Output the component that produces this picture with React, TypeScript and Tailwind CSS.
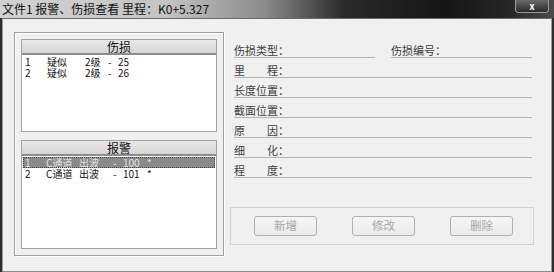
import React from "react";

const cjk = { fontFamily: '"SimSun", "Noto Sans CJK SC", "DejaVu Sans", sans-serif' };

function Field({ label, className = "" }: { label: string; className?: string }) {
  return (
    <div className={`h-[20px] flex items-end border-b border-[#b4b4b4] ${className}`}>
      <span className="text-[11px] leading-[12px] pb-[1px] text-[#3c3c3c] whitespace-pre">{label}</span>
    </div>
  );
}

function ListBox({
  title,
  rows,
  cols,
  selected,
  className = "",
}: {
  title: string;
  rows: string[][];
  cols: string[];
  selected?: number;
  className?: string;
}) {
  return (
    <div className={`flex flex-col border border-[#a0a0a0] bg-white ${className}`}>
      <div className="h-[15px] flex items-center justify-center bg-gradient-to-b from-[#e8e8e8] to-[#d6d6d6] border-b-2 border-[#8c8c8c] text-[12px] leading-[12px] text-[#111]">
        {title}
      </div>
      <div className="flex flex-col pt-[1px] px-[1px]">
        {rows.map((r, i) => (
          <div
            key={i}
            className={`h-[11px] flex items-center pl-[2px] text-[10px] leading-[11px] whitespace-pre ${
              selected === i ? "bg-[#8a8a8a] text-[#e4e4e4] outline-1 outline-dotted outline-[#444] -outline-offset-1" : "text-[#111]"
            }`}
          >
            {r.map((c, j) => (
              <span key={j} className={cols[j]}>
                {c}
              </span>
            ))}
          </div>
        ))}
      </div>
    </div>
  );
}

function Btn({ label }: { label: string }) {
  return (
    <div className="w-[63px] h-[20px] flex items-center justify-center rounded-[3px] border border-[#b0b0b0] bg-gradient-to-b from-[#f6f6f6] to-[#ebebeb] text-[11.5px] text-[#a6a6a6]">
      {label}
    </div>
  );
}

export default function App() {
  return (
    <div className="w-[554px] h-[272px] bg-[#2e2e2e] overflow-hidden" style={cjk}>
      <div className="h-[18px] relative bg-[linear-gradient(90deg,#d2d2d2_0%,#c4c4c4_30%,#8a8a8a_48%,#2a2a2a_62%,#151515_80%,#262626_92%,#4a4a4a_100%)]">
        <span className="absolute left-[2px] top-[2px] text-[12px] leading-[14px] text-[#111] whitespace-pre">
          文件1 报警、伤损查看 里程：K0+5.327
        </span>
        <div className="absolute left-[515px] top-0 w-[34px] h-[13px] rounded-b-[4px] border border-t-0 border-[#9a9a9a] bg-gradient-to-b from-[#6a6a6a] to-[#2a2a2a] flex items-center justify-center text-white text-[9px] leading-[9px] font-bold">
          x
        </div>
      </div>
      <div className="h-[254px] mx-[2px] mb-[2px] bg-[#f0f0f0] border-t border-[#6a6a6a] border-x border-x-[#9a9a9a] border-b border-b-[#8a8a8a] flex">
        <div className="ml-[11px] mt-[13px] w-[210px] h-[224px] border border-[#a0a0a0] shadow-[inset_1px_1px_0_#ffffff,1px_1px_0_#ffffff] flex flex-col px-[6px] pt-[6px]">
          <ListBox
            title="伤损"
            className="h-[93px]"
            cols={["w-[22px]", "w-[38px]", "w-[23px]", "w-[10px]", ""]}
            rows={[
              ["1", "疑似", "2级", "-", "25"],
              ["2", "疑似", "2级", "-", "26"],
            ]}
          />
          <ListBox
            title="报警"
            className="h-[109px] mt-[8px]"
            selected={0}
            cols={["w-[21px]", "w-[33px]", "w-[34px]", "w-[10px]", "w-[24px]", ""]}
            rows={[
              ["1", "C通道", "出波", "-", "100", "*"],
              ["2", "C通道", "出波", "-", "101", "*"],
            ]}
          />
        </div>
        <div className="ml-[6px] w-[304px] flex flex-col">
          <div className="mt-[19px] ml-[4px] w-[298px] flex flex-col">
            <div className="flex gap-[16px]">
              <Field label="伤损类型：" className="w-[141px]" />
              <Field label="伤损编号：" className="w-[141px]" />
            </div>
            <Field label="里　　程：" />
            <Field label="长度位置：" />
            <Field label="截面位置：" />
            <Field label="原　　因：" />
            <Field label="细　　化：" />
            <Field label="程　　度：" />
          </div>
          <div className="mt-[29px] h-[38px] border border-[#d2d2d2] flex items-center pl-[23px] gap-[35px]">
            <Btn label="新增" />
            <Btn label="修改" />
            <Btn label="删除" />
          </div>
        </div>
      </div>
    </div>
  );
}
